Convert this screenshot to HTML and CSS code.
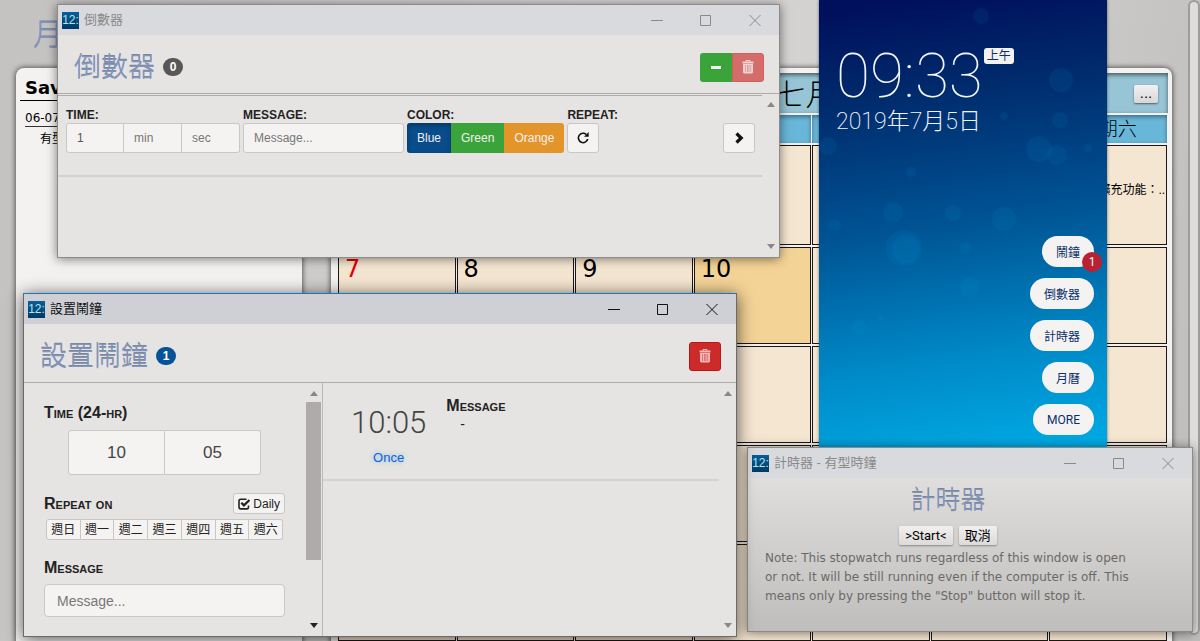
FILE: index.html
```
<!DOCTYPE html>
<html lang="zh-Hant">
<head>
  <meta charset="UTF-8" />
  <meta name="viewport" content="width=device-width, initial-scale=1" />
  <title>有型時鐘</title>
  <link rel="stylesheet" href="styles.css">
</head>
<body>
  <!-- Shared icons -->
  <svg class="sprite" aria-hidden="true">
    <symbol id="i-min" viewBox="0 0 12 12"><path d="M0 6.5h12" stroke="currentColor" fill="none"/></symbol>
    <symbol id="i-max" viewBox="0 0 12 12"><path d="M.5 1.5h10v10H.5z" stroke="currentColor" fill="none"/></symbol>
    <symbol id="i-close" viewBox="0 0 12 12"><path d="M.5 1l11 11M11.500 1L.5 12" stroke="currentColor" fill="none"/></symbol>
    <symbol id="i-trash" viewBox="0 0 12 14"><path fill="none" stroke="currentColor" d="M4 2V.5h4V2"/><path fill="currentColor" d="M.5 1.500h11v2H.5z"/><path fill="currentColor" fill-rule="evenodd" d="M1 4h10v8.500l-1 1H2l-1-1zM3 5v7h.5V5zM5 5v7h.5V5zM6.700 5v7h.5V5zM8.600 5v7h.5V5z"/></symbol>
    <symbol id="i-minus" viewBox="0 0 12 12"><path fill="currentColor" d="M1 5h10v3H1z"/></symbol>
    <symbol id="i-repeat" viewBox="0 0 12 12"><path fill="none" stroke="currentColor" stroke-width="1.600" d="M9.300 2.500A4.700 4.700 0 1 0 10.700 7"/><path fill="currentColor" d="M11.700 0v4.800H7z"/></symbol>
    <symbol id="i-right" viewBox="0 0 12 12"><path fill="none" stroke="currentColor" stroke-width="3.200" d="M3.500 1.500L8.200 6l-4.700 4.500"/></symbol>
    <symbol id="i-check" viewBox="0 0 12 12"><path fill="none" stroke="currentColor" stroke-width="1.600" d="M8.500 1.300H2.500Q1 1.300 1 2.800v6.500Q1 10.900 2.500 10.900h6.500Q10.500 10.900 10.500 9.300V7.500"/><path fill="none" stroke="currentColor" stroke-width="2.200" d="M3.300 4.800l2.600 2.600L11.500 2"/></symbol>
    <symbol id="i-up" viewBox="0 0 8 5"><path fill="currentColor" d="M0 5l4-5 4 5z"/></symbol>
    <symbol id="i-down" viewBox="0 0 8 5"><path fill="currentColor" d="M0 0l4 5 4-5z"/></symbol>
  </svg>

  <div class="desktop">
    <!-- Calendar page -->
    <main class="page">
      <h1 class="page-title">月曆</h1>
      <div class="columns">
        <aside class="saved">
          <h2>Saved</h2>
          <a class="saved-date" href="#">06-07-2019</a>
          <p>有型時鐘</p>
        </aside>
        <section class="calendar">
          <div class="month">
            <span class="month-name">2019年七月</span>
            <button class="more">...</button>
          </div>
          <table>
            <thead>
              <tr><th>星期日</th><th>星期一</th><th>星期二</th><th>星期三</th><th>星期四</th><th>星期五</th><th>星期六</th></tr>
            </thead>
            <tbody>
              <tr><td></td><td>1</td><td>2</td><td>3</td><td>4</td><td>5</td><td>6<p class="event">有型時鐘擴充功能：..</p></td></tr>
              <tr><td class="sun">7</td><td>8</td><td>9</td><td class="marked">10</td><td>11</td><td>12</td><td>13</td></tr>
              <tr><td class="sun">14</td><td>15</td><td>16</td><td>17</td><td>18</td><td>19</td><td>20</td></tr>
              <tr><td class="sun">21</td><td>22</td><td>23</td><td>24</td><td>25</td><td>26</td><td>27</td></tr>
              <tr><td class="sun">28</td><td>29</td><td>30</td><td>31</td><td></td><td></td><td></td></tr>
            </tbody>
          </table>
        </section>
      </div>
    </main>
    <div class="page-scroll"></div>

    <!-- Clock popup -->
    <section class="clock">
      <svg class="bubbles" viewBox="0 0 288 447" preserveAspectRatio="xMidYMid slice" aria-hidden="true">
        <circle cx="162" cy="16" r="8"/><circle cx="242" cy="80" r="12"/><circle cx="241" cy="120" r="8"/>
        <circle cx="220" cy="149" r="13"/><circle cx="238" cy="155" r="10"/><circle cx="9" cy="146" r="9"/>
        <circle cx="92" cy="172" r="5"/><circle cx="74" cy="212" r="10"/><circle cx="134" cy="213" r="8"/>
        <circle cx="185" cy="219" r="12"/><circle cx="85" cy="248" r="18"/><circle cx="87" cy="249" r="14"/>
        <circle cx="146" cy="248" r="6"/><circle cx="151" cy="287" r="10"/><circle cx="40" cy="327" r="7"/>
        <circle cx="61" cy="318" r="3"/><circle cx="160" cy="404" r="10"/><circle cx="269" cy="148" r="4"/>
        <circle cx="185" cy="116" r="4"/><circle cx="16" cy="225" r="6"/>
      </svg>
      <div class="time-row">
        <span class="time">09:33</span>
        <span class="ampm">上午</span>
      </div>
      <div class="date">2019年7月5日</div>
      <nav class="menu">
        <button>鬧鐘<span class="count">1</span></button>
        <button>倒數器</button>
        <button>計時器</button>
        <button>月曆</button>
        <button>MORE</button>
      </nav>
    </section>

    <!-- Countdown window -->
    <section class="window win-countdown">
      <header class="titlebar">
        <span class="app-icon">12:</span>
        <span class="win-title">倒數器</span>
        <button aria-label="Minimize"><svg><use href="#i-min"/></svg></button>
        <button aria-label="Maximize"><svg><use href="#i-max"/></svg></button>
        <button aria-label="Close"><svg><use href="#i-close"/></svg></button>
      </header>
      <div class="heading">
        <h2>倒數器</h2>
        <span class="badge">0</span>
        <div class="actions group">
          <button class="btn btn-green" aria-label="Collapse"><svg><use href="#i-minus"/></svg></button>
          <button class="btn btn-red faded" aria-label="Delete all"><svg class="trash"><use href="#i-trash"/></svg></button>
        </div>
      </div>
      <div class="win-body">
        <div class="timers">
          <form class="timer">
            <div class="field">
              <label for="hr">TIME:</label>
              <div class="group time-inputs">
                <input id="hr" type="text" value="1">
                <input type="text" placeholder="min" aria-label="Minutes">
                <input type="text" placeholder="sec" aria-label="Seconds">
              </div>
            </div>
            <div class="field">
              <label for="msg">MESSAGE:</label>
              <input id="msg" class="msg" type="text" placeholder="Message...">
            </div>
            <div class="field">
              <span class="label">COLOR:</span>
              <div class="group">
                <button type="button" class="btn btn-blue">Blue</button>
                <button type="button" class="btn btn-green">Green</button>
                <button type="button" class="btn btn-orange">Orange</button>
              </div>
            </div>
            <div class="field">
              <span class="label">REPEAT:</span>
              <button type="button" class="btn btn-plain" aria-label="Repeat"><svg><use href="#i-repeat"/></svg></button>
            </div>
            <button type="button" class="btn btn-plain go" aria-label="Start"><svg><use href="#i-right"/></svg></button>
          </form>
        </div>
        <div class="scrollbar"><svg><use href="#i-up"/></svg><svg><use href="#i-down"/></svg></div>
      </div>
    </section>

    <!-- Stopwatch window -->
    <section class="window win-stopwatch">
      <header class="titlebar">
        <span class="app-icon">12:</span>
        <span class="win-title">計時器 - 有型時鐘</span>
        <button aria-label="Minimize"><svg><use href="#i-min"/></svg></button>
        <button aria-label="Maximize"><svg><use href="#i-max"/></svg></button>
        <button aria-label="Close"><svg><use href="#i-close"/></svg></button>
      </header>
      <div class="stopwatch">
        <h2>計時器</h2>
        <div class="stopwatch-buttons">
          <button>&gt;Start&lt;</button>
          <button>取消</button>
        </div>
        <p>Note: This stopwatch runs regardless of this window is open or not. It will be still running even if the computer is off. This means only by pressing the "Stop" button will stop it.</p>
      </div>
    </section>

    <!-- Alarm window -->
    <section class="window win-alarm active">
      <header class="titlebar">
        <span class="app-icon">12:</span>
        <span class="win-title">設置鬧鐘</span>
        <button aria-label="Minimize"><svg><use href="#i-min"/></svg></button>
        <button aria-label="Maximize"><svg><use href="#i-max"/></svg></button>
        <button aria-label="Close"><svg><use href="#i-close"/></svg></button>
      </header>
      <div class="heading">
        <h2>設置鬧鐘</h2>
        <span class="badge badge-blue">1</span>
        <div class="actions">
          <button class="btn btn-red" aria-label="Delete all"><svg class="trash"><use href="#i-trash"/></svg></button>
        </div>
      </div>
      <div class="win-body">
        <form class="alarm-form">
          <label class="caps" for="alarm-hour">Time (24-hr)</label>
          <div class="group alarm-time">
            <input id="alarm-hour" type="text" value="10">
            <input type="text" value="05" aria-label="Minute">
          </div>
          <div class="repeat-row">
            <span class="caps">Repeat on</span>
            <button type="button" class="daily"><svg><use href="#i-check"/></svg>Daily</button>
          </div>
          <div class="group days">
            <button type="button">週日</button>
            <button type="button">週一</button>
            <button type="button">週二</button>
            <button type="button">週三</button>
            <button type="button">週四</button>
            <button type="button">週五</button>
            <button type="button">週六</button>
          </div>
          <label class="caps" for="alarm-msg">Message</label>
          <input id="alarm-msg" class="alarm-msg" type="text" placeholder="Message...">
        </form>
        <div class="scrollbar has-thumb"><svg><use href="#i-up"/></svg><span class="thumb"></span><svg class="on"><use href="#i-down"/></svg></div>
        <div class="alarm-list">
          <article class="alarm">
            <div class="alarm-when">
              <div class="alarm-clock">10:05</div>
              <div class="once">Once</div>
            </div>
            <div>
              <div class="caps">Message</div>
              <p>-</p>
            </div>
          </article>
        </div>
        <div class="scrollbar"><svg><use href="#i-up"/></svg><svg><use href="#i-down"/></svg></div>
      </div>
    </section>
  </div>
</body>
</html>
```
FILE: styles.css
```
* { margin: 0; padding: 0; box-sizing: border-box; }
body {
  font-family: "Liberation Sans", "Noto Sans CJK TC", sans-serif;
  font-size: 12px;
  color: #222;
}
button, input { font: inherit; color: inherit; }
button { border: none; background: none; cursor: pointer; }
svg { display: block; width: 12px; height: 12px; }
.sprite { position: absolute; width: 0; height: 0; }
.desktop {
  position: relative;
  display: flex;
  height: 100vh;
  overflow: hidden;
  background: linear-gradient(100deg, #c3c2c0, #d6d4d3 45%, #d3d2d0 70%, #bebdbb);
}
h1, h2 { font-weight: 300; color: #7d96c6; text-shadow: 0 -1px 0 #85868c; }

/* Calendar page */
.page { flex: 1; padding: 0 16px; font-family: "DejaVu Sans", "Noto Sans CJK TC", sans-serif; }
.page-title { height: 68px; padding-left: 17px; font-size: 30px; line-height: 70px; }
.columns { display: flex; gap: 29px; }
.saved, .calendar {
  background: #f3f2f1;
  border-radius: 8px 8px 0 0;
  box-shadow: 0 0 5px 1px rgba(0,0,0,0.55);
}
.saved { width: 286px; padding: 7px 4px; color: #000; }
.saved h2 {
  padding-left: 5px;
  margin-bottom: 10px;
  border-bottom: 1px solid #000;
  font-size: 18px;
  line-height: 25px;
  font-weight: 700;
  color: #000;
  text-shadow: none;
}
.saved-date {
  display: inline-block;
  margin-left: 5px;
  line-height: 15px;
  color: #000;
  text-decoration: none;
  border-bottom: 1px solid #333;
}
.saved p { padding-left: 20px; font-size: 12px; line-height: 24px; }
.calendar { flex: 1; padding: 5px 4px 5px 6px; color: #000; }
.month {
  position: relative;
  height: 40px;
  background: #97c5d5;
  box-shadow: inset 0 2px 4px rgba(0,0,0,0.55);
  text-align: center;
  font-size: 30px;
  line-height: 44px;
  font-weight: 300;
}
.more {
  position: absolute;
  top: 12px;
  right: 10px;
  width: 24px;
  height: 18px;
  font-size: 13px;
  line-height: 16px;
  font-weight: 400;
  color: #000;
  background: linear-gradient(#f3f1f1, #d8d6d6);
  border-radius: 2px;
  box-shadow: 0 1px 2px rgba(0,0,0,0.5);
}
table { width: 100%; table-layout: fixed; border-spacing: 1px 2px; }
th {
  height: 28px;
  background: #68b7d9;
  box-shadow: inset 0 2px 4px rgba(0,0,0,0.4);
  font-size: 19px;
  line-height: 24px;
  font-weight: 300;
}
td {
  height: 97px;
  padding-top: 6px;
  border: 1px solid #1c1714;
  background: #f5e6d1;
  vertical-align: top;
  font-size: 24px;
  line-height: 30px;
  text-indent: 6px;
  overflow: hidden;
}
tbody tr:first-child td { height: 100px; }
.sun { color: #e60000; }
.marked { background: #f4d397; }
.event {
  font-family: "Liberation Sans", "Noto Sans CJK TC", sans-serif;
  font-size: 12px;
  line-height: 16px;
  text-indent: 0;
  white-space: nowrap;
}
.page-scroll {
  width: 12px;
  height: 99%;
  border: 2px solid #9d9c9a;
  border-radius: 7px;
  background: #dedddb;
}

/* Clock popup */
.clock {
  position: absolute;
  top: 0;
  left: 819px;
  width: 288px;
  height: 447px;
  padding: 40px 13px 0 17px;
  background: linear-gradient(172deg, #00105c 3%, #002b6d 22%, #005494 50%, #008ac8 78%, #00abe5);
  box-shadow: 0 0 3px rgba(0,0,0,0.5);
  color: #f2f6fa;
  font-family: Roboto, "Noto Sans CJK TC", sans-serif;
}
.bubbles { position: absolute; top: 0; left: 0; width: 100%; height: 100%; fill: rgba(0,170,220,0.09); }
.time-row { display: flex; align-items: flex-start; gap: 1px; }
.time { font-size: 62px; line-height: 72px; font-weight: 100; }
.ampm {
  margin-top: 8px;
  padding: 0 3px;
  border-radius: 3px;
  background: #f3f2f1;
  color: #0a2f6b;
  font-size: 12px;
  line-height: 16px;
}
.date { font-size: 23px; line-height: 20px; font-weight: 200; }
.menu { display: flex; flex-direction: column; align-items: flex-end; gap: 11px; margin-top: 104px; }
.menu button {
  position: relative;
  height: 31px;
  padding: 0 14px;
  border-radius: 16px;
  background: #f4f3f2;
  color: #0a2f6b;
  font-size: 12px;
}
.count {
  position: absolute;
  right: -8px;
  bottom: -5px;
  width: 20px;
  height: 20px;
  border-radius: 50%;
  background: #ba2233;
  color: #fff;
  line-height: 20px;
}

/* Windows */
.window {
  position: absolute;
  display: flex;
  flex-direction: column;
  border: 1px solid #8c8b89;
  background: #e5e4e2;
  box-shadow: 0 1px 10px rgba(0,0,0,0.5);
}
.win-countdown { top: 4px; left: 57px; width: 723px; height: 254px; }
.win-stopwatch { top: 447px; left: 747px; width: 446px; height: 185px; background: linear-gradient(#e6e4e2, #bfbebc); }
.win-alarm { top: 293px; left: 23px; width: 714px; height: 344px; }
.window.active { border-color: #6a6a6a; border-top-color: #1b76bd; box-shadow: 0 2px 16px rgba(0,0,0,0.65); }
.titlebar { display: flex; align-items: center; height: 30px; padding-left: 4px; background: #d9dade; color: #8a8a8a; }
.active .titlebar { background: #cfd0d6; color: #111; }
.win-title { flex: 1; padding-left: 5px; font-size: 13px; line-height: 20px; }
.titlebar button { display: flex; align-items: center; justify-content: center; width: 49px; height: 30px; }
.app-icon {
  width: 17px;
  height: 17px;
  background: linear-gradient(#06609a, #023a63);
  color: #b8e4f2;
  font-size: 12px;
  line-height: 17px;
  text-align: center;
}
.heading {
  display: flex;
  align-items: center;
  gap: 8px;
  height: 59px;
  padding: 6px 15px 0 16px;
  border-bottom: 1px solid #adacaa;
}
.heading h2 { font-size: 27px; line-height: 34px; padding-top: 2px; }
.badge {
  min-width: 20px;
  border-radius: 9px;
  background: #585756;
  color: #fff;
  font-size: 12px;
  line-height: 18px;
  font-weight: 700;
  text-align: center;
}
.badge-blue { background: #08529a; }
.actions { margin-left: auto; }
.group { display: flex; }
.btn {
  display: flex;
  align-items: center;
  justify-content: center;
  min-width: 32px;
  height: 29px;
  padding: 0 10px;
  border-radius: 3px;
  color: #f0efee;
}
.trash { height: 14px; }
.group > * { border-radius: 0; }
.group > :first-child { border-radius: 3px 0 0 3px; }
.group > :last-child { border-radius: 0 3px 3px 0; }
.btn-green { background: #3aa43a; }
.btn-red { padding: 0 9px; background: #cb2c29; border: 1px solid #c01414; color: #f0b9b7; }
.btn-red.faded { background: #d46c6a; border-color: #d05f5d; color: #eed3d1; }
.btn-blue { background: #084c8c; box-shadow: inset 0 2px 5px rgba(0,0,0,0.3); }
.btn-orange { background: #e49529; }
.btn-plain { padding: 0 9px; border: 1px solid #c9c7c5; background: #f4f3f1; color: #111; }
.win-body { display: flex; flex: 1; min-height: 0; }
.scrollbar {
  display: flex;
  flex-direction: column;
  align-items: center;
  justify-content: space-between;
  width: 17px;
  padding: 8px 0;
  color: #8a8886;
}
.scrollbar svg { width: 8px; height: 5px; }
.scrollbar .on { color: #222; }
.thumb { width: 15px; height: 158px; margin: 6px 0 auto; background: #aeabaa; }

/* Countdown form */
.timers { flex: 1; margin-top: 1px; border-top: 1px solid #adacaa; }
.timer { display: flex; align-items: flex-end; gap: 3px; padding: 12px 7px 22px 8px; border-bottom: 2px solid #d3d2d0; }
label, .label { display: block; font-weight: 700; line-height: 15px; }
input {
  height: 29px;
  padding: 0 10px;
  border: 1px solid #cac8c6;
  border-radius: 3px;
  background: #f4f3f1;
  color: #555;
}
input::placeholder { color: #777; opacity: 1; }
.time-inputs input { width: 58px; }
.group input + input { border-left: none; }
.msg { width: 161px; }
.timer .btn { height: 30px; }
.timer input { height: 30px; }
.go { margin-left: auto; }

/* Alarm window */
.caps { font-size: 16px; line-height: 18px; font-weight: 700; font-variant: small-caps; color: #222; }
.alarm-form { width: 281px; padding: 21px 20px 0; }
.alarm-time { margin: 8px 24px 18px; }
.alarm-time input {
  flex: 1;
  width: 50%;
  height: 45px;
  font-size: 17px;
  text-align: center;
  color: #444;
}
.repeat-row { display: flex; align-items: center; justify-content: space-between; }
.daily {
  display: flex;
  align-items: center;
  gap: 3px;
  height: 21px;
  padding: 0 4px;
  border: 1px solid #c9c7c5;
  border-radius: 3px;
  background: #f4f3f1;
}
.days { margin: 5px 2px 19px; }
.days button {
  flex: 1;
  height: 21px;
  border: 1px solid #c9c7c5;
  background: #f4f3f1;
  font-size: 12px;
  line-height: 18px;
}
.days button + button { border-left: none; }
.alarm-msg { width: 100%; height: 33px; margin-top: 7px; padding: 0 12px; font-size: 14px; border-radius: 4px; }
.has-thumb + .alarm-list { border-left: 1px solid #bab9b7; }
.alarm-list { flex: 1; }
.alarm { display: flex; gap: 20px; height: 98px; padding: 14px 28px 0; border-bottom: 2px solid #d3d2d0; }
.alarm-when { text-align: center; }
.alarm-clock { font-family: Roboto, sans-serif; font-size: 31px; line-height: 52px; font-weight: 300; color: #444; }
.once { font-size: 13px; line-height: 18px; color: #0b66d8; text-shadow: 0 0 5px #7fb2ee; }
.alarm p { padding-left: 14px; font-size: 14px; line-height: 18px; }

/* Stopwatch window */
.stopwatch { padding: 4px 61px 0 17px; }
.stopwatch h2 { font-size: 25px; line-height: 36px; text-align: center; }
.stopwatch-buttons { display: flex; justify-content: center; gap: 6px; padding: 8px 0 4px; }
.stopwatch-buttons button {
  height: 19px;
  padding: 0 6px;
  border-radius: 2px;
  background: linear-gradient(#f1f0ef, #dcdbd9);
  box-shadow: 0 1px 2px rgba(0,0,0,0.35);
  font-family: Roboto, "Noto Sans CJK TC", sans-serif;
  font-size: 13px;
  line-height: 18px;
  color: #000;
}
.stopwatch p { font-family: "DejaVu Sans", sans-serif; font-size: 12px; line-height: 19px; color: #6b6967; }
```
